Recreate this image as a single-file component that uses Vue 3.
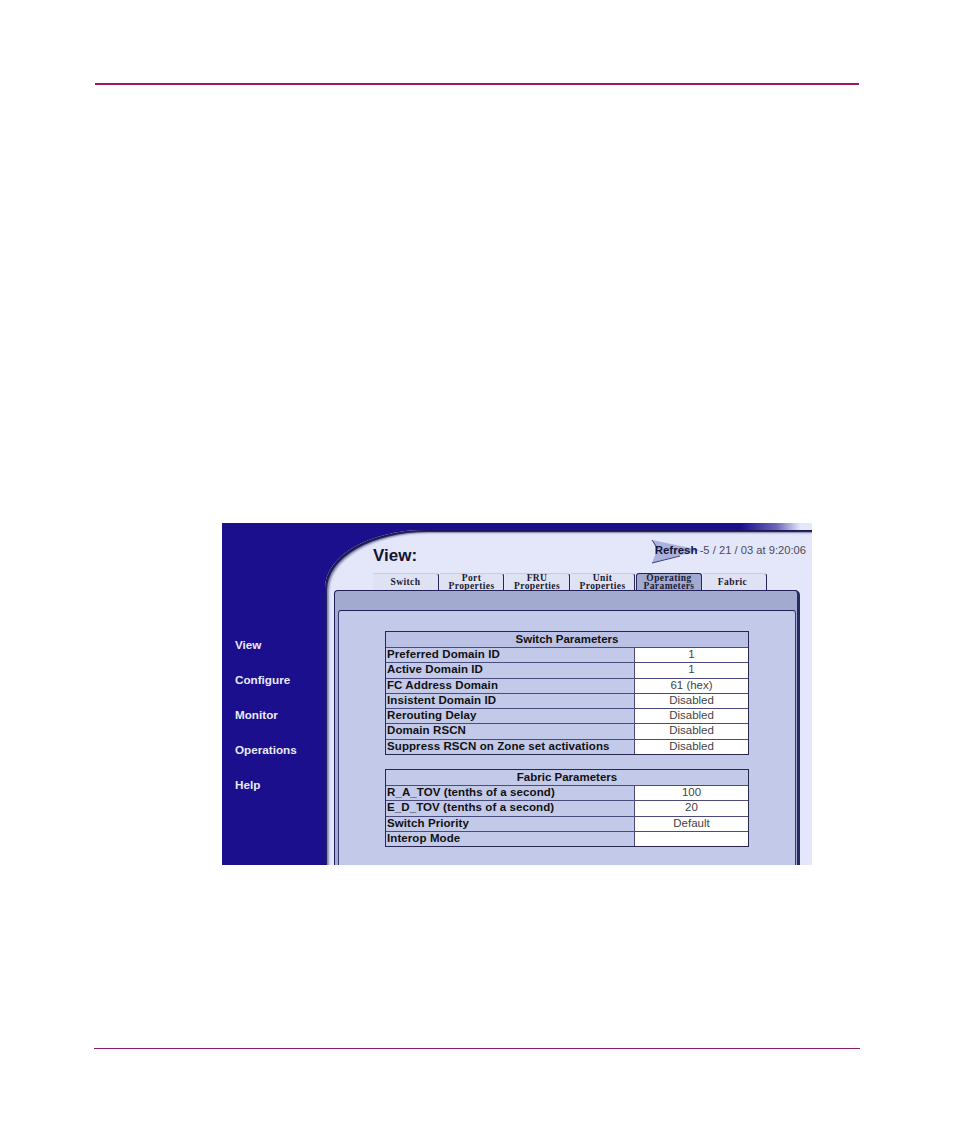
<script setup>
const navItems = ['View', 'Configure', 'Monitor', 'Operations', 'Help']
const tabs = [
  { lines: ['Switch'], width: 66 },
  { lines: ['Port', 'Properties'], width: 64 },
  { lines: ['FRU', 'Properties'], width: 65 },
  { lines: ['Unit', 'Properties'], width: 64 },
  { lines: ['Operating', 'Parameters'], width: 66, active: true },
  { lines: ['Fabric'], width: 64 }
]
const tables = [
  {
    title: 'Switch Parameters',
    cls: 'switch',
    rows: [
      ['Preferred Domain ID', '1'],
      ['Active Domain ID', '1'],
      ['FC Address Domain', '61 (hex)'],
      ['Insistent Domain ID', 'Disabled'],
      ['Rerouting Delay', 'Disabled'],
      ['Domain RSCN', 'Disabled'],
      ['Suppress RSCN on Zone set activations', 'Disabled']
    ]
  },
  {
    title: 'Fabric Parameters',
    cls: 'fabric',
    rows: [
      ['R_A_TOV (tenths of a second)', '100'],
      ['E_D_TOV (tenths of a second)', '20'],
      ['Switch Priority', 'Default'],
      ['Interop Mode', '']
    ]
  }
]
</script>

<template>
  <div class="page">
    <div class="top-rule"></div>
    <div class="shot">
      <nav class="side">
        <a v-for="item in navItems" :key="item" class="nav-item">{{ item }}</a>
      </nav>
      <main class="main">
        <header class="head">
          <h1 class="title">View:</h1>
          <div class="refresh">
            <span class="refresh-btn">
              <svg class="arrow" width="52" height="26" viewBox="0 0 52 26">
                <polygon points="2,1 50,11 2,24 7,11" fill="#a9b2dc" />
                <path d="M2 1 L8 10" stroke="#3a3f78" fill="none" />
                <path d="M2 24 L30 17" stroke="#3a3f78" fill="none" />
              </svg>
              <span class="refresh-label">Refresh</span>
            </span>
            <span class="stamp">-5 / 21 / 03 at 9:20:06</span>
          </div>
        </header>
        <div class="tabs">
          <div
            v-for="tab in tabs"
            :key="tab.lines.join()"
            class="tab"
            :class="{ active: tab.active }"
            :style="{ width: tab.width + 'px' }"
          >
            <span v-for="line in tab.lines" :key="line" class="tab-line">{{ line }}</span>
          </div>
        </div>
        <section class="outer">
          <div class="inner">
            <div v-for="t in tables" :key="t.title" class="grid" :class="t.cls">
              <div class="grid-head">{{ t.title }}</div>
              <div v-for="r in t.rows" :key="r[0]" class="row">
                <div class="label">{{ r[0] }}</div>
                <div class="value">{{ r[1] }}</div>
              </div>
            </div>
          </div>
        </section>
      </main>
    </div>
    <div class="bottom-rule"></div>
  </div>
</template>

<style>
html, body { margin: 0; background: #fff; }
</style>

<style scoped>
.page {
  width: 954px;
  height: 1145px;
  background: #fff;
  padding-top: 83px;
  box-sizing: border-box;
  overflow: hidden;
  font-family: "Liberation Sans", Arial, sans-serif;
}
.top-rule {
  height: 2px;
  width: 764px;
  margin-left: 95px;
  background: #a5145f;
}
.shot {
  margin: 438px 0 0 222px;
  width: 590px;
  height: 342px;
  display: flex;
  overflow: hidden;
  background: linear-gradient(90deg, #1c0f8e 0, #1c0f8e 88%, #6d66b8 94%, #e4e6fa 98%);
}
.bottom-rule {
  height: 1px;
  width: 766px;
  margin: 183px 0 0 94px;
  background: #8e1a66;
}
.side {
  width: 103px;
  flex: none;
  background: #1c0f8e;
  margin-top: 7px;
  padding: 108px 0 0 13px;
  box-sizing: border-box;
  display: flex;
  flex-direction: column;
  gap: 21px;
}
.nav-item {
  color: #e8eaf8;
  font-size: 11.7px;
  font-weight: bold;
  line-height: 14px;
  height: 14px;
}
.main {
  flex: 1;
  margin-top: 7px;
  background: #e4e6fa;
  border-top-left-radius: 100px 58px;
  box-shadow: inset 2px 2px 1px #1c1a50, inset 4px 3px 2px #8f90b6;
  min-width: 0;
}
.head {
  height: 43px;
  display: flex;
  justify-content: space-between;
  padding: 0 6px 0 48px;
  box-sizing: border-box;
}
.title {
  margin: 16px 0 0;
  font-size: 17px;
  line-height: 20px;
  font-weight: bold;
  color: #14142e;
}
.refresh {
  display: flex;
  align-items: flex-start;
  padding-top: 9px;
}
.refresh-btn {
  width: 48px;
  height: 26px;
  position: relative;
  display: block;
}
.arrow { position: absolute; left: -2px; top: 0; }
.refresh-label {
  position: absolute;
  left: 3px;
  top: 4px;
  font-size: 11.5px;
  font-weight: bold;
  line-height: 14px;
  color: #15153a;
}
.stamp {
  font-size: 11.2px;
  line-height: 14px;
  margin-top: 4px;
  color: #4a4a5c;
  white-space: nowrap;
}
.tabs {
  display: flex;
  height: 17px;
  padding-left: 48px;
  gap: 1px;
}
.tab {
  flex: none;
  box-sizing: border-box;
  background: #dfe2f3;
  border-top: 1px solid #c8cce6;
  border-right: 1px solid #23235e;
  border-top-right-radius: 3px;
  display: flex;
  flex-direction: column;
  align-items: center;
  justify-content: center;
  font-family: "Liberation Serif", serif;
  font-size: 9.5px;
  font-weight: bold;
  line-height: 8px;
  letter-spacing: 0.4px;
  color: #1a1a34;
}
.tab:last-child { padding-right: 4px; }
.tab.active {
  background: #a3aacf;
  border: 1px solid #23235e;
  border-bottom: none;
  border-radius: 3px 3px 0 0;
}
.tab-line { display: block; }
.outer {
  margin: 0 0 0 9px;
  width: 466px;
  height: 275px;
  box-sizing: border-box;
  background: #a3aacf;
  border-top: 1px solid #1e1e58;
  border-left: 1px solid #1e1e58;
  border-right: 3px solid #2a2a62;
  border-top-left-radius: 4px;
  border-top-right-radius: 5px;
  padding-top: 19px;
}
.inner {
  height: 100%;
  margin-left: 3px;
  margin-right: 1px;
  box-sizing: border-box;
  background: #c3c9e9;
  border-top: 1px solid #1e1e58;
  border-left: 1px solid #3a3a70;
  border-right: 1px solid #3a3a70;
  border-top-left-radius: 3px;
  border-top-right-radius: 3px;
  padding: 20px 0 0 46px;
  display: flex;
  flex-direction: column;
  gap: 14px;
}
.grid {
  width: 364px;
  box-sizing: border-box;
  border: 1px solid #26264f;
  display: grid;
  grid-template-columns: 1fr;
  font-size: 11.5px;
  color: #111;
}
.switch { height: 124px; grid-template-rows: 15px repeat(7, 1fr); }
.fabric { height: 78px; grid-template-rows: 15px repeat(4, 1fr); }
.grid-head {
  text-align: center;
  font-weight: bold;
  line-height: 15px;
  background: #bac1e5;
}
.fabric .grid-head { background: #c3c9e9; }
.row {
  display: flex;
  border-top: 1px solid #4a4a7c;
  min-height: 0;
}
.label {
  width: 249px;
  flex: none;
  box-sizing: border-box;
  padding-left: 1px;
  font-weight: bold;
  line-height: 13px;
  letter-spacing: 0.09px;
  white-space: nowrap;
  background: #c3c9e9;
  border-right: 1px solid #4a4a7c;
}
.value {
  flex: 1;
  text-align: center;
  line-height: 13px;
  background: #fff;
  color: #444;
}
</style>
